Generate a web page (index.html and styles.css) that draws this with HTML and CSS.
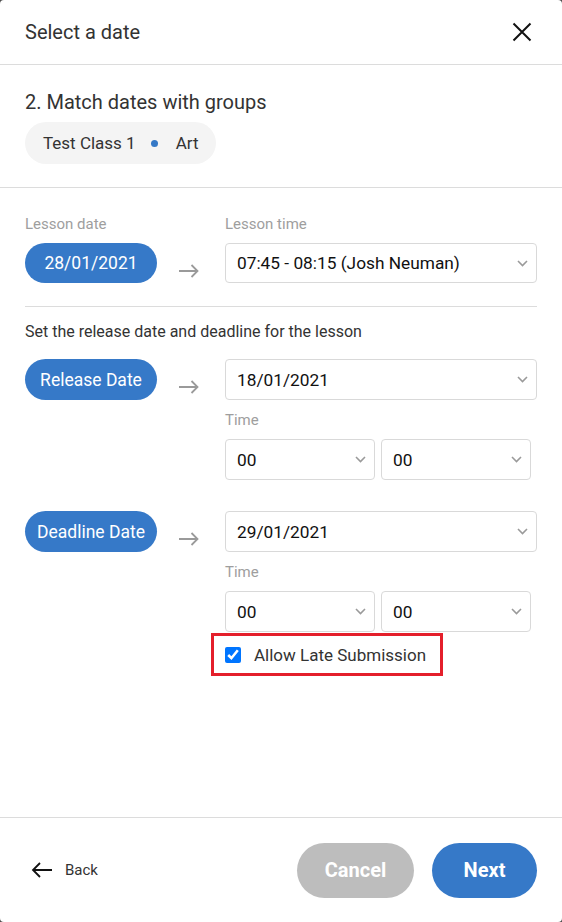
FILE: index.html
```html
<!DOCTYPE html>
<html lang="en">
<head>
<meta charset="utf-8">
<title>Select a date</title>
<link rel="stylesheet" href="styles.css">
</head>
<body>
<div class="dialog">
  <header class="dlg-header">
    <h1 class="dlg-title">Select a date</h1>
    <button class="close-btn" aria-label="Close">
      <svg width="20" height="20" viewBox="0 0 20 20"><path d="M1.5 1.5L18.5 18.5M18.5 1.5L1.5 18.5" stroke="#111" stroke-width="2" fill="none"/></svg>
    </button>
  </header>

  <section class="groups">
    <h2 class="step-title">2. Match dates with groups</h2>
    <div class="chip"><span>Test Class 1</span><span class="dot"></span><span>Art</span></div>
  </section>

  <main class="content">
    <div class="row labels">
      <span class="label left-label">Lesson date</span>
      <span class="label">Lesson time</span>
    </div>
    <div class="row">
      <span class="pill pill-sm">28/01/2021</span>
      <span class="arrow"><svg width="20" height="14" viewBox="0 0 20 14"><path d="M0 7H18.5M12.5 1L18.5 7L12.5 13" stroke="#9a9a9a" stroke-width="1.8" fill="none"/></svg></span>
      <div class="field">
        <div class="select"><span>07:45 - 08:15 (Josh Neuman)</span><svg class="chev" width="11" height="7" viewBox="0 0 11 7"><path d="M1 1L5.5 5.5L10 1" stroke="#9a9a9a" stroke-width="1.6" fill="none"/></svg></div>
      </div>
    </div>

    <hr class="divider">
    <p class="hint">Set the release date and deadline for the lesson</p>

    <div class="row date-row">
      <span class="pill">Release Date</span>
      <span class="arrow"><svg width="20" height="14" viewBox="0 0 20 14"><path d="M0 7H18.5M12.5 1L18.5 7L12.5 13" stroke="#9a9a9a" stroke-width="1.8" fill="none"/></svg></span>
      <div class="field">
        <div class="select tall"><span>18/01/2021</span><svg class="chev" width="11" height="7" viewBox="0 0 11 7"><path d="M1 1L5.5 5.5L10 1" stroke="#9a9a9a" stroke-width="1.6" fill="none"/></svg></div>
        <span class="label time-label">Time</span>
        <div class="time-pair">
          <div class="select tall"><span>00</span><svg class="chev" width="11" height="7" viewBox="0 0 11 7"><path d="M1 1L5.5 5.5L10 1" stroke="#9a9a9a" stroke-width="1.6" fill="none"/></svg></div>
          <div class="select tall"><span>00</span><svg class="chev" width="11" height="7" viewBox="0 0 11 7"><path d="M1 1L5.5 5.5L10 1" stroke="#9a9a9a" stroke-width="1.6" fill="none"/></svg></div>
        </div>
      </div>
    </div>

    <div class="row date-row deadline-row">
      <span class="pill">Deadline Date</span>
      <span class="arrow"><svg width="20" height="14" viewBox="0 0 20 14"><path d="M0 7H18.5M12.5 1L18.5 7L12.5 13" stroke="#9a9a9a" stroke-width="1.8" fill="none"/></svg></span>
      <div class="field">
        <div class="select tall"><span>29/01/2021</span><svg class="chev" width="11" height="7" viewBox="0 0 11 7"><path d="M1 1L5.5 5.5L10 1" stroke="#9a9a9a" stroke-width="1.6" fill="none"/></svg></div>
        <span class="label time-label">Time</span>
        <div class="time-pair">
          <div class="select tall"><span>00</span><svg class="chev" width="11" height="7" viewBox="0 0 11 7"><path d="M1 1L5.5 5.5L10 1" stroke="#9a9a9a" stroke-width="1.6" fill="none"/></svg></div>
          <div class="select tall"><span>00</span><svg class="chev" width="11" height="7" viewBox="0 0 11 7"><path d="M1 1L5.5 5.5L10 1" stroke="#9a9a9a" stroke-width="1.6" fill="none"/></svg></div>
        </div>
        <label class="late-box">
          <input type="checkbox" checked class="check">
          <span>Allow Late Submission</span>
        </label>
      </div>
    </div>
  </main>

  <footer class="dlg-footer">
    <button class="back-btn">
      <svg width="22" height="16" viewBox="0 0 22 16"><path d="M21 8H2M9 1L2 8L9 15" stroke="#111" stroke-width="1.8" fill="none"/></svg>
      <span>Back</span>
    </button>
    <div class="actions">
      <button class="btn btn-cancel">Cancel</button>
      <button class="btn btn-next">Next</button>
    </div>
  </footer>
</div>
</body>
</html>
```

FILE: styles.css
```css
* { box-sizing: border-box; }

html, body {
  margin: 0;
  padding: 0;
  background: #4d4d4d;
}

body {
  font-family: Roboto, "Liberation Sans", Arial, sans-serif;
  color: #333;
}

.dialog {
  width: 562px;
  height: 922px;
  background: #fff;
  border-radius: 4px;
  display: flex;
  flex-direction: column;
  overflow: hidden;
}

.dlg-header {
  height: 65px;
  flex: 0 0 65px;
  border-bottom: 1px solid #dcdcdc;
  display: flex;
  align-items: center;
  justify-content: space-between;
  padding: 0 30px 0 25px;
}

.dlg-title {
  margin: 0;
  font-size: 20px;
  font-weight: 400;
  color: #333;
}

.close-btn {
  border: 0;
  background: none;
  padding: 0;
  width: 20px;
  height: 20px;
  display: flex;
}

.groups {
  padding: 25px 25px 23px;
  border-bottom: 1px solid #dcdcdc;
}

.step-title {
  margin: 0;
  font-size: 20px;
  line-height: 24px;
  font-weight: 400;
  color: #333;
}

.chip {
  margin-top: 8px;
  display: inline-flex;
  align-items: center;
  height: 42px;
  padding: 0 18px;
  border-radius: 21px;
  background: #f4f4f4;
  font-size: 17px;
  color: #333;
}

.dot {
  width: 7px;
  height: 7px;
  border-radius: 50%;
  background: #3478c6;
  margin: 0 18px 0 15px;
}

.content {
  flex: 1;
  padding: 27px 25px 0 25px;
}

.row {
  display: flex;
  align-items: flex-start;
}

.labels {
  margin-bottom: 10px;
}

.label {
  font-size: 15px;
  line-height: 18px;
  color: #9e9e9e;
}

.left-label {
  width: 200px;
}

.pill {
  width: 132px;
  flex: 0 0 132px;
  height: 41px;
  border-radius: 21px;
  background: #3679c8;
  color: #fff;
  font-size: 17.5px;
  display: flex;
  align-items: center;
  justify-content: center;
}

.pill-sm {
  height: 40px;
  border-radius: 20px;
}

.arrow {
  width: 68px;
  flex: 0 0 68px;
  padding: 21px 0 0 22px;
  display: flex;
}

.field {
  flex: 1;
  display: flex;
  flex-direction: column;
  align-items: stretch;
}

.select {
  height: 40px;
  border: 1px solid #d9d9d9;
  border-radius: 4px;
  display: flex;
  align-items: center;
  justify-content: space-between;
  padding: 0 8px 0 11px;
  font-size: 17.3px;
  color: #111;
  background: #fff;
}

.select.tall {
  height: 41px;
}

.chev {
  flex: 0 0 auto;
}

.divider {
  border: 0;
  border-top: 1px solid #dcdcdc;
  margin: 23px 0 0;
}

.hint {
  margin: 16px 0 18px;
  font-size: 16px;
  line-height: 18px;
  color: #333;
}

.time-label {
  margin: 11px 0 10px;
}

.time-pair {
  display: grid;
  grid-template-columns: 1fr 1fr;
  gap: 6px;
  margin-right: 6px;
}

.deadline-row {
  margin-top: 31px;
}

.late-box {
  align-self: flex-start;
  margin: 1px 0 0 -14px;
  height: 43px;
  border: 3px solid #e41f2b;
  display: inline-flex;
  align-items: center;
  padding: 0 14px 0 11px;
  font-size: 17px;
  color: #333;
}

.check {
  width: 16px;
  height: 16px;
  margin: 0 13px 0 0;
  accent-color: #0075ff;
}

.dlg-footer {
  flex: 0 0 105px;
  border-top: 1px solid #dcdcdc;
  display: flex;
  align-items: center;
  justify-content: space-between;
  padding: 0 25px 0 31px;
}

.back-btn {
  border: 0;
  background: none;
  padding: 0;
  display: flex;
  align-items: center;
  gap: 12px;
  font-family: inherit;
  font-size: 15px;
  color: #333;
}

.actions {
  display: flex;
  gap: 18px;
}

.btn {
  height: 55px;
  border: 0;
  border-radius: 28px;
  font-family: inherit;
  font-size: 20px;
  font-weight: 700;
  color: #fff;
}

.btn-cancel {
  width: 117px;
  background: #bdbdbd;
}

.btn-next {
  width: 105px;
  background: #3679c8;
}
```
